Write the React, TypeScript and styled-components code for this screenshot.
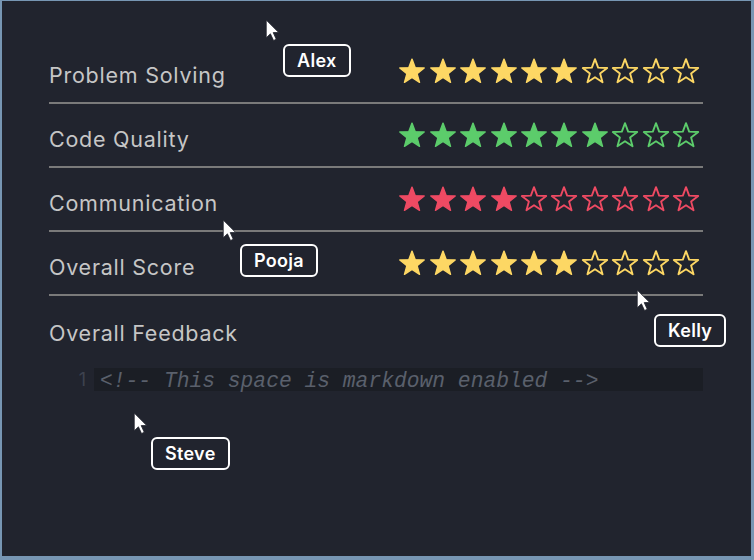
import styled, { createGlobalStyle } from 'styled-components';

const GlobalStyle = createGlobalStyle`
html, body {
	margin: 0;
	padding: 0;
	background: #21242e;
}
`;

const Frame = styled.div`
position: relative;
box-sizing: border-box;
width: 754px;
height: 560px;
overflow: hidden;
background: #21242e;
border-style: solid;
border-color: #7796b3;
border-width: 1px 3px 4px 2px;
font-family: Inter, "Noto Sans", sans-serif;
`;

const Panel = styled.div`
width: 654px;
padding: 39px 0 0 47px;
`;

const Row = styled.div`
display: flex;
align-items: center;
height: 62px;
border-bottom: 2px solid #7a7a7a;
`;

const Label = styled.div`
flex: 1;
padding-top: 7px;
color: #c6c6c6;
font-size: 21.5px;
letter-spacing: 0.75px;
`;

const Stars = styled.div`
display: flex;
gap: 2.4px;
margin-right: 3px;
`;

const StarIcon = styled.svg<{ $color: string; $filled: boolean }>`
display: block;
width: 28px;
height: 28px;
polygon {
	fill: ${p => (p.$filled ? p.$color : 'none')};
	stroke: ${p => p.$color};
	stroke-width: ${p => (p.$filled ? 1.2 : 1.6)};
	stroke-linejoin: round;
}
`;

const FeedbackTitle = styled.div`
padding: 24px 0 0;
height: 40px;
color: #c6c6c6;
font-size: 21.5px;
letter-spacing: 0.75px;
`;

const Editor = styled.div`
display: flex;
align-items: center;
margin-top: 8px;
`;

const LineNo = styled.div`
width: 45px;
padding-right: 8px;
text-align: right;
color: #3d424e;
font-family: Inter, sans-serif;
font-size: 18px;
box-sizing: border-box;
`;

const CodeLine = styled.div`
flex: 1;
height: 23px;
line-height: 26px;
padding-left: 6px;
background: #1b1e25;
color: #5a606c;
font-family: "Liberation Mono", monospace;
font-style: italic;
font-size: 21.3px;
white-space: pre;
`;

const Cursor = styled.div<{ $x: number; $y: number }>`
position: absolute;
left: ${p => p.$x}px;
top: ${p => p.$y}px;
`;

const CursorArrow = styled.svg`
display: block;
width: 15px;
height: 23px;
`;

const NameTag = styled.div`
position: absolute;
left: 18px;
top: 25px;
height: 29px;
padding: 0 12px;
border: 2px solid #ffffff;
border-radius: 6px;
background: #21242e;
color: #ffffff;
font-family: Inter, "Noto Sans", sans-serif;
font-weight: 600;
font-size: 18px;
letter-spacing: 0.3px;
line-height: 29px;
white-space: nowrap;
`;

const criteria = [
	{ name: 'Problem Solving', score: 6, color: '#fdd764' },
	{ name: 'Code Quality', score: 7, color: '#5ccc6b' },
	{ name: 'Communication', score: 4, color: '#ee4a63' },
	{ name: 'Overall Score', score: 6, color: '#fdd764' },
];

const cursors = [
	{ name: 'Alex', x: 265, y: 19 },
	{ name: 'Pooja', x: 222, y: 219 },
	{ name: 'Kelly', x: 636, y: 289 },
	{ name: 'Steve', x: 133, y: 412 },
];

const STAR = '12,1.8 14.7,9.08 22.46,9.4 16.37,14.22 18.47,21.7 12,17.4 5.53,21.7 7.63,14.22 1.54,9.4 9.3,9.08';

function Star({ color, filled }: { color: string; filled: boolean }) {
	return (
		<StarIcon viewBox='0 0 24 24' $color={color} $filled={filled}>
			<polygon points={STAR} />
		</StarIcon>
	);
}

export default function App() {
	return (
		<Frame>
			<GlobalStyle />
			<Panel>
				{criteria.map(c => (
					<Row key={c.name}>
						<Label>{c.name}</Label>
						<Stars>
							{Array.from({ length: 10 }, (_, i) => (
								<Star key={i} color={c.color} filled={i < c.score} />
							))}
						</Stars>
					</Row>
				))}
				<FeedbackTitle>Overall Feedback</FeedbackTitle>
				<Editor>
					<LineNo>1</LineNo>
					<CodeLine>{'<!-- This space is markdown enabled -->'}</CodeLine>
				</Editor>
			</Panel>
			{cursors.map(c => (
				<Cursor key={c.name} $x={c.x - 2} $y={c.y - 1}>
					<CursorArrow viewBox='0 0 14 22'>
						<path d='M1 1 L1 18 L5 14.2 L8 20.6 L10.6 19.4 L7.7 13 L13 13 Z' fill='#ffffff' stroke='#21242e' strokeWidth='0.8' strokeLinejoin='round' />
					</CursorArrow>
					<NameTag>{c.name}</NameTag>
				</Cursor>
			))}
		</Frame>
	);
}
